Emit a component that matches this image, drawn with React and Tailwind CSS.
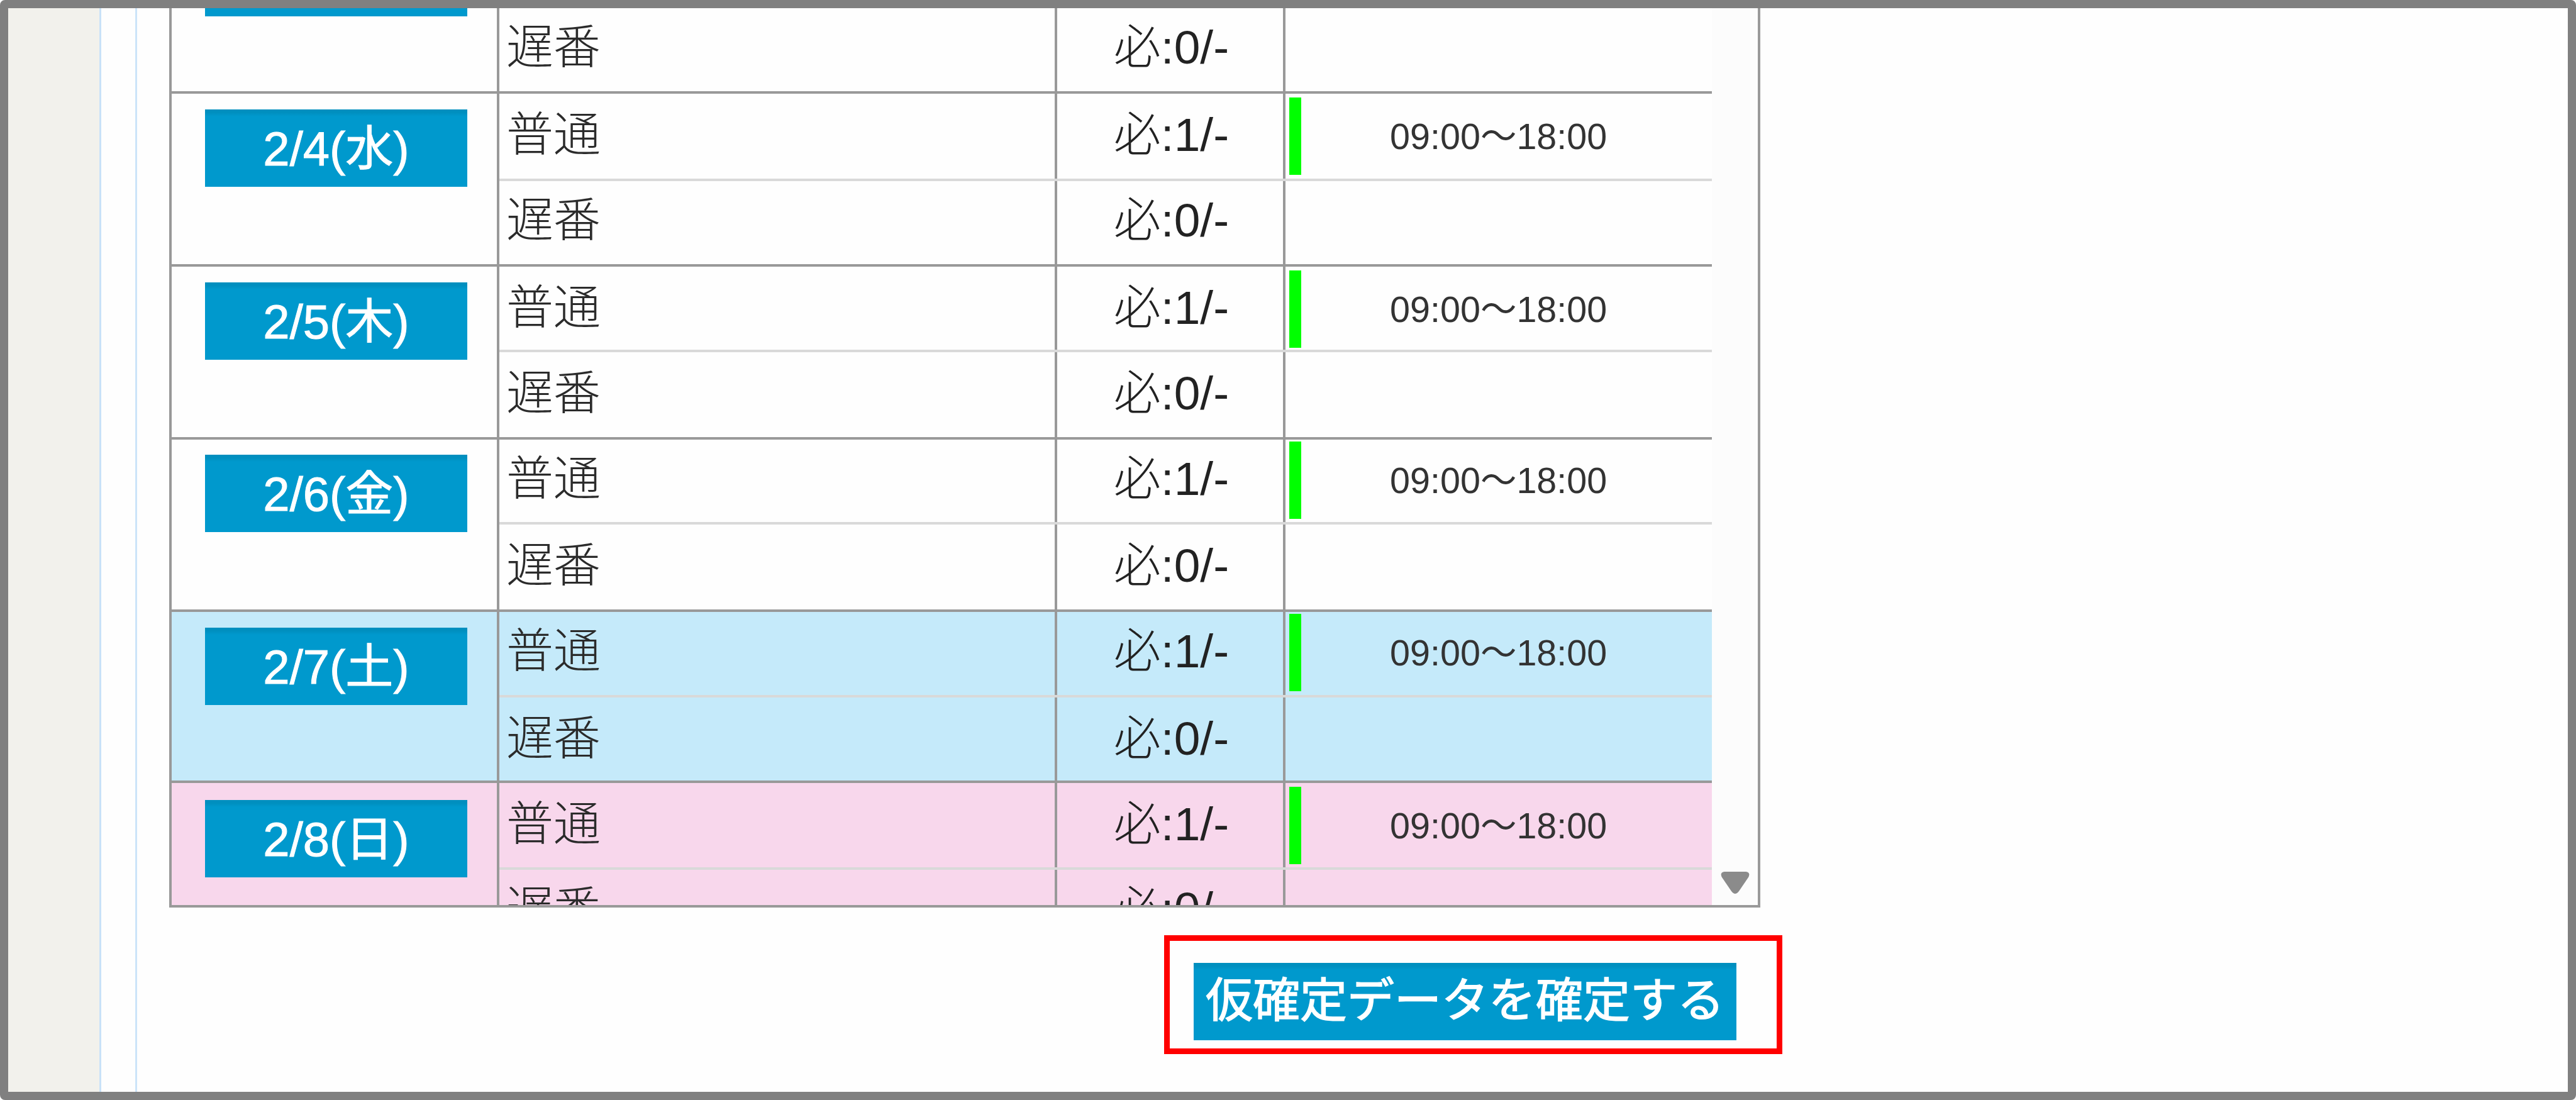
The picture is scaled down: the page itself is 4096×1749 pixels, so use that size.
import React from 'react';

// top = height of the 普通 row, bottom = height of the 遅番 row (both include their rule)
const days = [
  { date: '2/4(水)', top: 139, bottom: 136, shift: 3, lateShift: 0, bg: 'bg-[#fefefe]', badge: 'mt-[25px]' },
  { date: '2/5(木)', top: 136, bottom: 139, shift: 3, lateShift: 3, bg: 'bg-[#fefefe]', badge: 'mt-[25px]' },
  { date: '2/6(金)', top: 135, bottom: 139, shift: 0, lateShift: 3, bg: 'bg-[#fefefe]', badge: 'mt-[24px]' },
  { date: '2/7(土)', top: 136, bottom: 136, shift: 0, lateShift: 3, bg: 'bg-[#c5eafa]', badge: 'mt-[25px]' },
  { date: '2/8(日)', top: 138, bottom: 136, shift: 3, lateShift: 0, bg: 'bg-[#f8d7ec]', badge: 'mt-[27px]' },
];

const ShiftRow = ({ name, count, time, height, shift, last }) => (
  <div
    className={`flex shrink-0 border-b-4 ${last ? 'border-[#999999]' : 'border-[#d9d9d9]'}`}
    style={{ height }}
  >
    <div className="w-[887px] border-r-4 border-[#999999] pl-[11px]">
      <div
        className="font-['Noto_Sans_CJK_JP',sans-serif] font-light text-[75px] leading-[75px] text-[#2b2b2b]"
        style={{ paddingTop: 18 + shift }}
      >
        {name}
      </div>
    </div>
    <div className="w-[363px] border-r-4 border-[#999999]">
      <div
        className="pl-[4px] text-center font-light text-[75px] leading-[75px] text-[#222222]"
        style={{ paddingTop: 25 + shift }}
      >
        必:{count}/-
      </div>
    </div>
    <div className="flex w-[678px] pl-[6px]">
      {time && (
        <>
          <div className="h-[123px] w-[19px] bg-[#00ff00]" style={{ marginTop: 3 + shift }} />
          <div
            className="pl-[141px] text-[57.5px] leading-[75px] text-[#333333]"
            style={{ paddingTop: 28 + shift }}
          >
            {time}
          </div>
        </>
      )}
    </div>
  </div>
);

const DateCell = ({ children }) => (
  <div className="w-[521px] shrink-0 border-r-4 border-b-4 border-[#999999] pl-[53px]">{children}</div>
);

const App = () => {
  return (
    <div className="flex h-[1749px] w-[4096px] overflow-hidden rounded-[8px] border-[13px] border-[#808080] bg-[#fefefe] font-['Liberation_Sans','Noto_Sans_CJK_JP',sans-serif]">
      <div className="w-[148px] border-r-[3px] border-[#c9e2f8] bg-[#f2f1ec]" />
      <div className="w-[57px] border-r-[3px] border-[#cce4f9]" />
      <div className="flex flex-col pl-[51px]">
        <div className="flex h-[1430px] w-[2530px] overflow-hidden border-x-4 border-b-4 border-[#999999]">
          <div className="flex w-[2449px] flex-col">
            <div className="flex shrink-0">
              <DateCell>
                <div className="h-[13px] w-[417px] bg-[#0099cd]" />
              </DateCell>
              <ShiftRow name="遅番" count={0} height={136} shift={0} last />
            </div>
            {days.map((day) => (
              <div key={day.date} className={`flex shrink-0 ${day.bg}`}>
                <DateCell>
                  <div
                    className={`${day.badge} h-[123px] w-[417px] bg-linear-to-b from-[#008fbf] from-4% to-[#0099cd] to-9% pt-[25px] text-center text-[76px] leading-[75px] text-white [-webkit-text-stroke:1px_white]`}
                  >
                    {day.date}
                  </div>
                </DateCell>
                <div className="flex flex-col">
                  <ShiftRow name="普通" count={1} time="09:00〜18:00" height={day.top} shift={day.shift} />
                  <ShiftRow name="遅番" count={0} height={day.bottom} shift={day.lateShift} last />
                </div>
              </div>
            ))}
          </div>
          <div className="flex w-[73px] flex-col items-center justify-end bg-[#fcfcfc] pb-[17px]">
            <svg width="46" height="36" viewBox="0 0 46 36" fill="#8b8b8b">
              <path d="M6 0H40Q48 1 44 9L29 31Q23 39 17 31L2 9Q-2 1 6 0Z" />
            </svg>
          </div>
        </div>
        <div className="mt-[44px] ml-[1582px] h-[189px] w-[983px] border-[9px] border-[#ff0000] pt-[35px] pl-[38px]">
          <div className="h-[123px] w-[863px] bg-linear-to-b from-[#008fbf] from-4% to-[#0099cd] to-9% pt-[23px] text-center text-[75px] leading-[75px] whitespace-nowrap text-white [-webkit-text-stroke:1.5px_white]">
            仮確定データを確定する
          </div>
        </div>
      </div>
    </div>
  );
};

export default App;
